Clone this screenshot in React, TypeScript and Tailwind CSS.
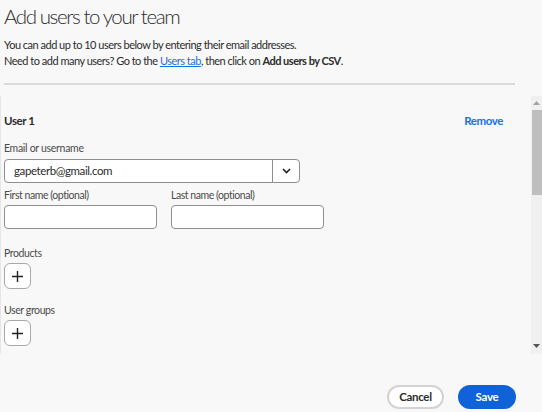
import { useState } from "react";

const font = { fontFamily: '"Lato", "Liberation Sans", sans-serif' };

function PlusButton() {
  return (
    <button
      type="button"
      className="flex h-[26px] w-[27px] items-center justify-center rounded-[6px] border border-[#a8a8a8] bg-white"
    >
      <svg width="13" height="13" viewBox="0 0 13 13">
        <path d="M6.5 1v11M1 6.5h11" stroke="#222" strokeWidth="1.4" />
      </svg>
    </button>
  );
}

function ScrollBar() {
  return (
    <div className="flex w-[11px] flex-col items-center bg-[#f0f0f0]">
      <svg className="mt-[5px]" width="7" height="4" viewBox="0 0 7 4">
        <path d="M3.5 0L7 4H0z" fill="#a3a3a3" />
      </svg>
      <div className="mt-[5px] h-[85px] w-[10px] self-end bg-[#bfbfbf]" />
      <div className="flex-1" />
      <svg className="mb-[6px]" width="7" height="4" viewBox="0 0 7 4">
        <path d="M0 0h7L3.5 4z" fill="#555" />
      </svg>
    </div>
  );
}

export default function App() {
  const [email, setEmail] = useState("gapeterb@gmail.com");

  return (
    <div
      className="flex h-[412px] w-[542px] flex-col overflow-hidden bg-[#f8f8f8] text-[#2c2c2c]"
      style={font}
    >
      <div className="pl-[4px] pr-[27px]">
        <h1 className="pt-[1px] text-[20.5px] font-light leading-[30px] tracking-[-1.4px] text-[#2c2c2c]">
          Add users to your team
        </h1>
        <div className="mt-[6px] text-[11px] leading-[16px] tracking-[-0.5px]">
          <p>You can add up to 10 users below by entering their email addresses.</p>
          <p>
            Need to add many users? Go to the{" "}
            <a className="text-[#1473e6] underline">Users tab</a>, then click on{" "}
            <span className="font-bold">Add users by CSV</span>.
          </p>
        </div>
        <div className="mt-[14px] h-[2px] bg-[#dadada]" />
      </div>

      <div className="mt-[11px] flex h-[258px] border-l border-[#e6e6e6]">
        <div className="flex-1 overflow-hidden pl-[3px] pr-[28px] pt-[17px]">
          <div className="flex items-center justify-between">
            <span className="text-[11.5px] font-bold leading-[16px] tracking-[-0.4px]">User 1</span>
            <a className="text-[11.5px] font-bold leading-[16px] tracking-[-0.4px] text-[#1473e6]">
              Remove
            </a>
          </div>

          <label className="mt-[12px] block text-[10.5px] leading-[14px] tracking-[-0.3px] text-[#4b4b4b]">
            Email or username
          </label>
          <div className="mt-[4px] flex h-[24px] w-[296px] rounded-[4px] border border-[#8f8f8f] bg-white">
            <input
              value={email}
              onChange={(e) => setEmail(e.target.value)}
              className="min-w-0 flex-1 bg-transparent pl-[9px] text-[11.5px] tracking-[-0.4px] text-[#2c2c2c] outline-none"
              style={font}
            />
            <div className="flex w-[27px] items-center justify-center border-l border-[#8f8f8f]">
              <svg width="9" height="6" viewBox="0 0 9 6">
                <path d="M1 1l3.5 3.5L8 1" fill="none" stroke="#222" strokeWidth="1.6" />
              </svg>
            </div>
          </div>

          <div className="mt-[5px] flex gap-[14px]">
            <div className="w-[153px]">
              <label className="block text-[10.5px] leading-[14px] tracking-[-0.45px] text-[#4b4b4b]">
                First name (optional)
              </label>
              <input className="mt-[3px] h-[24px] w-full rounded-[4px] border border-[#8f8f8f] bg-white" />
            </div>
            <div className="w-[153px]">
              <label className="block text-[10.5px] leading-[14px] tracking-[-0.45px] text-[#4b4b4b]">
                Last name (optional)
              </label>
              <input className="mt-[3px] h-[24px] w-full rounded-[4px] border border-[#8f8f8f] bg-white" />
            </div>
          </div>

          <div className="mt-[17px] text-[10.5px] leading-[14px] tracking-[-0.4px] text-[#4b4b4b]">
            Products
          </div>
          <div className="mt-[3px]">
            <PlusButton />
          </div>

          <div className="mt-[14px] text-[10.5px] leading-[14px] tracking-[-0.4px] text-[#4b4b4b]">
            User groups
          </div>
          <div className="mt-[3px]">
            <PlusButton />
          </div>
        </div>
        <ScrollBar />
      </div>

      <div className="flex flex-1 items-end justify-end gap-[14px] pb-[3px] pr-[26px]">
        <button className="h-[24px] w-[57px] rounded-full border-2 border-[#d3d3d3] bg-white text-[11.5px] font-bold tracking-[-0.3px] text-[#2c2c2c]">
          Cancel
        </button>
        <button className="h-[24px] w-[58px] rounded-full bg-[#1062d9] text-[11.5px] font-bold tracking-[-0.3px] text-white">
          Save
        </button>
      </div>
    </div>
  );
}
